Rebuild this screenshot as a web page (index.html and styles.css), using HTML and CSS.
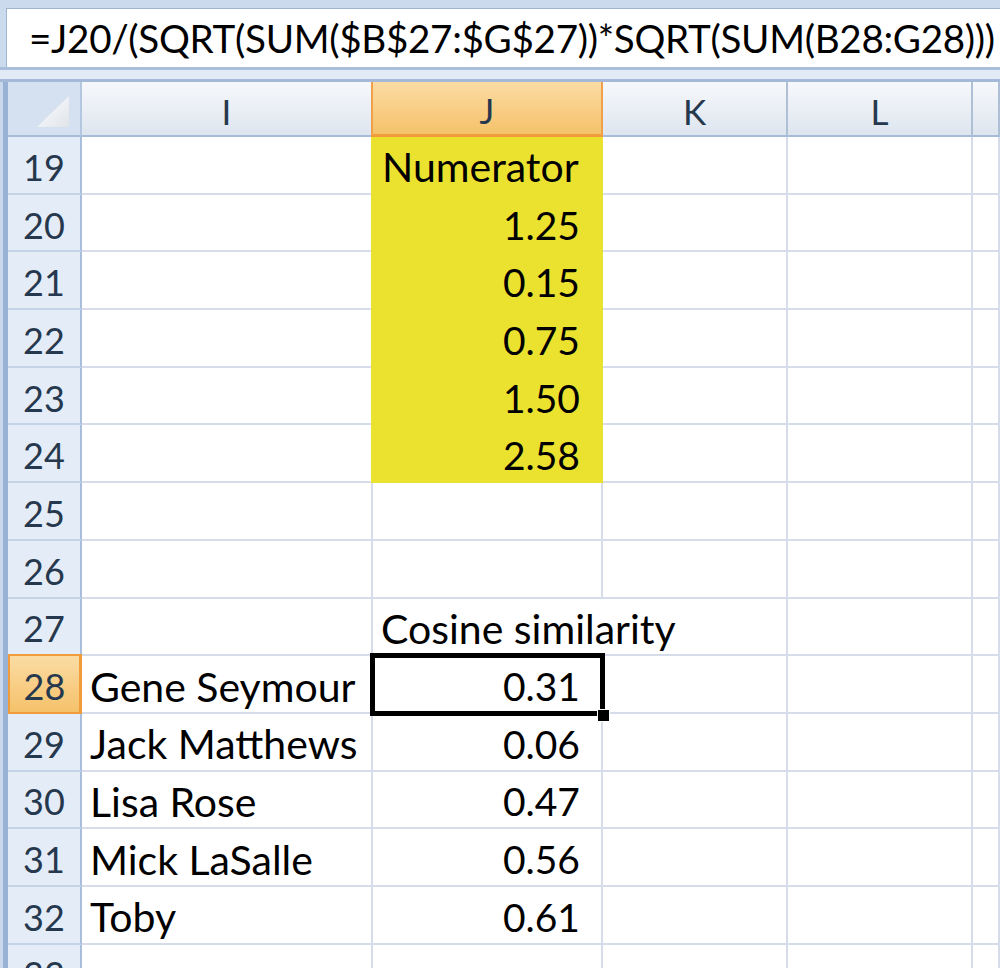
FILE: index.html
```html
<!DOCTYPE html>
<html>
<head>
<meta charset="utf-8">
<link rel="stylesheet" href="styles.css">
</head>
<body>
<div class="app">
  <div class="fbar"><span class="formula">=J20/(SQRT(SUM($B$27:$G$27))*SQRT(SUM(B28:G28)))</span></div>
  <div class="sep"></div>
  <div class="sheet">
    <div class="grid">
      <div class="corner"><span class="tri"></span></div>
      <div class="ch">I</div>
      <div class="ch sel">J</div>
      <div class="ch">K</div>
      <div class="ch">L</div>
      <div class="ch last"></div>

      <div class="rh">19</div><div class="c"></div><div class="c y txt">Numerator</div><div class="c"></div><div class="c"></div><div class="c"></div>
      <div class="rh">20</div><div class="c"></div><div class="c y num">1.25</div><div class="c"></div><div class="c"></div><div class="c"></div>
      <div class="rh">21</div><div class="c"></div><div class="c y num">0.15</div><div class="c"></div><div class="c"></div><div class="c"></div>
      <div class="rh">22</div><div class="c"></div><div class="c y num">0.75</div><div class="c"></div><div class="c"></div><div class="c"></div>
      <div class="rh">23</div><div class="c"></div><div class="c y num">1.50</div><div class="c"></div><div class="c"></div><div class="c"></div>
      <div class="rh">24</div><div class="c"></div><div class="c y num">2.58</div><div class="c"></div><div class="c"></div><div class="c"></div>
      <div class="rh">25</div><div class="c"></div><div class="c"></div><div class="c"></div><div class="c"></div><div class="c"></div>
      <div class="rh">26</div><div class="c"></div><div class="c"></div><div class="c"></div><div class="c"></div><div class="c"></div>
      <div class="rh">27</div><div class="c"></div><div class="c txt over">Cosine similarity</div><div class="c"></div><div class="c"></div><div class="c"></div>
      <div class="rh sel">28</div><div class="c txt">Gene Seymour</div><div class="c num active">0.31<span class="frame"></span><span class="handle"></span></div><div class="c"></div><div class="c"></div><div class="c"></div>
      <div class="rh">29</div><div class="c txt">Jack Matthews</div><div class="c num">0.06</div><div class="c"></div><div class="c"></div><div class="c"></div>
      <div class="rh">30</div><div class="c txt">Lisa Rose</div><div class="c num">0.47</div><div class="c"></div><div class="c"></div><div class="c"></div>
      <div class="rh">31</div><div class="c txt">Mick LaSalle</div><div class="c num">0.56</div><div class="c"></div><div class="c"></div><div class="c"></div>
      <div class="rh">32</div><div class="c txt">Toby</div><div class="c num">0.61</div><div class="c"></div><div class="c"></div><div class="c"></div>
      <div class="rh">33</div><div class="c"></div><div class="c"></div><div class="c"></div><div class="c"></div><div class="c"></div>
    </div>
  </div>
</div>
</body>
</html>
```

FILE: styles.css
```css
* { box-sizing: border-box; }
html, body { margin: 0; padding: 0; }
body {
  width: 1000px;
  height: 968px;
  overflow: hidden;
  background: #ccdaee;
  font-family: Lato, "Open Sans", sans-serif;
}
.app {
  width: 1000px;
  height: 968px;
  overflow: hidden;
  padding-top: 8px;
}
.fbar {
  margin-left: 6px;
  height: 59px;
  background: #ffffff;
  border-top: 1px solid #9fb4d0;
  border-left: 1px solid #9fb4d0;
  display: flex;
  align-items: center;
  padding-left: 22px;
  white-space: nowrap;
  overflow: hidden;
}
.formula {
  font-size: 38.6px;
  color: #000;
  letter-spacing: -0.3px;
}
.sep {
  height: 15px;
  border-top: 3px solid #a9bedb;
  border-bottom: 3px solid #a3b9d7;
  background: #e2eaf6;
}
.sheet {
  padding-left: 8px;
  background: linear-gradient(to right, #c9d8ec 0 3px, #98b1d4 3px 8px);
}
.grid {
  display: grid;
  grid-template-columns: 74px 291px 230px 185px 185px 1fr;
  grid-template-rows: 55px;
  grid-auto-rows: 57.7px;
  background: #fff;
}
.corner {
  background: #d5e1f1;
  border-right: 2px solid #b4c7e0;
  border-bottom: 2px solid #a7bcd9;
  position: relative;
}
.tri {
  position: absolute;
  left: 29px;
  top: 14px;
  width: 32px;
  height: 31px;
  background: linear-gradient(135deg, #ffffff, #dfe4ea);
  clip-path: polygon(100% 0, 100% 100%, 0 100%);
}
.ch {
  background: linear-gradient(to bottom, #f6f8fb 0%, #e9eef5 55%, #dde5ef 100%);
  border-right: 2px solid #aebfd6;
  border-bottom: 2px solid #a7bcd9;
  display: flex;
  align-items: center;
  justify-content: center;
  font-size: 35px;
  color: #26384d;
  padding-top: 4px;
}
.ch.sel {
  background: linear-gradient(to bottom, #fbdca4 0%, #f8cd84 55%, #f4c26a 100%);
  border-right: 2px solid #f0a04b;
  border-bottom: 3px solid #f29b3a;
  border-left: 2px solid #f0a04b;
  margin-left: -2px;
}
.rh {
  background: #e4ecf7;
  border-right: 2px solid #a9bedb;
  border-bottom: 2px solid #c5d3e6;
  display: flex;
  align-items: center;
  justify-content: center;
  font-size: 36px;
  color: #26384d;
  padding-top: 4px;
}
.rh.sel {
  background: linear-gradient(to bottom, #fbdca4 0%, #f8cd84 55%, #f4c26a 100%);
  border: 2px solid #f29b3a;
  border-right: 3px solid #f29b3a;
  margin-top: -2px;
}
.c {
  border-right: 2px solid #d6dcea;
  border-bottom: 2px solid #d6dcea;
  display: flex;
  align-items: center;
  font-size: 41px;
  color: #000;
  padding-top: 4px;
  white-space: nowrap;
  position: relative;
}
.c.y {
  background: #ebe22f;
  border-right-color: #ebe22f;
  border-bottom-color: #ebe22f;
  margin-left: -2px;
}
.c.txt { padding-left: 8px; }
.c.y.txt { padding-left: 11px; }
.c.num { justify-content: flex-end; padding-right: 21px; font-size: 39px; }
.c.over { overflow: visible; z-index: 1; border-right-color: transparent; }
.c.active { overflow: visible; z-index: 2; }
.frame {
  position: absolute;
  left: -3px;
  top: -3px;
  right: -4px;
  bottom: -4px;
  border: 5px solid #000;
}
.handle {
  position: absolute;
  right: -9px;
  bottom: -10px;
  width: 13px;
  height: 13px;
  background: #000;
  border: 1px solid #fff;
}
```
